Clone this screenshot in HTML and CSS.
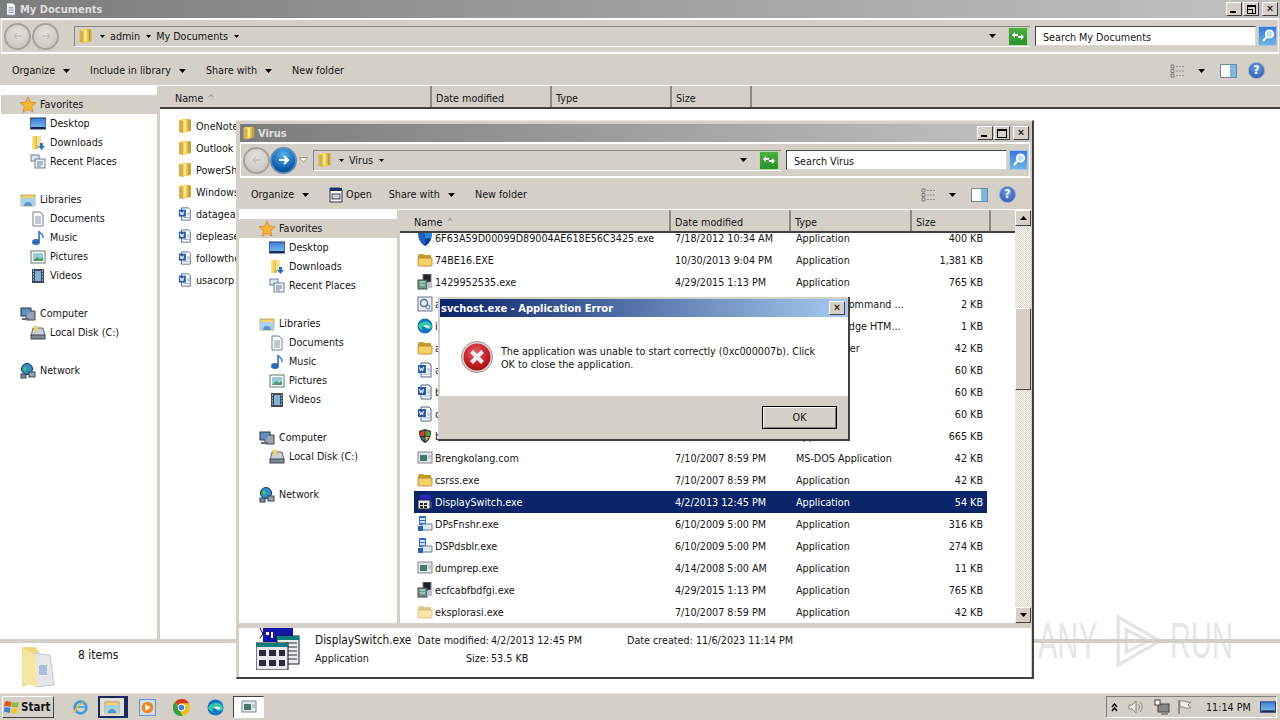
FILE: index.html
```html
<!DOCTYPE html>
<html lang="en">
<head>
<meta charset="utf-8">
<title>My Documents</title>
<link rel="stylesheet" href="styles.css">
</head>
<body>
<svg class="defs" width="0" height="0" aria-hidden="true">
  <defs>
    <linearGradient id="gf" x1="0" y1="0" x2="1" y2="0"><stop offset="0" stop-color="#f9e88a"/><stop offset=".6" stop-color="#f2cb4e"/><stop offset="1" stop-color="#c9a23e"/></linearGradient>
    <linearGradient id="gs" x1="0" y1="0" x2="0" y2="1"><stop offset="0" stop-color="#3f7fd6"/><stop offset="1" stop-color="#7cc0ea"/></linearGradient>
    <radialGradient id="ge" cx=".45" cy=".35" r=".7"><stop offset="0" stop-color="#e8626a"/><stop offset=".7" stop-color="#c0181f"/><stop offset="1" stop-color="#8c0d12"/></radialGradient>
    <symbol id="i-folder" viewBox="0 0 14 16"><path d="M1 2l3-1h8l1 1v11l-9 2-3-1z" fill="url(#gf)"/><path d="M1 2l4 1v12l-4-1z" fill="#d6b04a"/><path d="M7 2v11" stroke="#fff3b0" stroke-width="1.600"/><path d="M11 2v11" stroke="#b8923a" stroke-width="1"/></symbol>
    <symbol id="i-ofolder" viewBox="0 0 16 16"><path d="M1 4l1-2h4l1 1h7v3H1z" fill="#c79a2c"/><path d="M1 6h14v7a1 1 0 0 1-1 1H2a1 1 0 0 1-1-1z" fill="#f5d368" stroke="#a9842a" stroke-width=".8"/></symbol>
    <symbol id="i-word" viewBox="0 0 16 16"><path d="M4 1h8l2 2v12H4z" fill="#fff" stroke="#48618c"/><path d="M1 3h8v8H1z" fill="#2b5aa8"/><path d="M2.500 5l1 4 1-3 1 3 1-4" stroke="#fff" fill="none"/><path d="M10 7h3M10 9h3M6 12h7" stroke="#8ea6c8"/></symbol>
    <symbol id="i-star" viewBox="0 0 16 16"><path d="M8 0l2.300 5.200 5.700.6-4.300 3.800 1.300 5.600L8 12.300l-5 2.900 1.300-5.600L0 5.800l5.700-.6z" fill="#f7b733" stroke="#cf7f22" stroke-width=".7"/></symbol>
    <symbol id="i-desktop" viewBox="0 0 16 16"><rect y="2" width="16" height="11" fill="url(#gs)" stroke="#20386c"/><path d="M1 11h14v2H1z" fill="#1b2a52"/></symbol>
    <symbol id="i-down" viewBox="0 0 16 16"><path d="M2 1h6v13H2z" fill="url(#gf)"/><path d="M7 1h4v10H7z" fill="#f6e395"/><path d="M10 8h3v3h2l-3.500 4L8 11h2z" fill="#2a74c4"/></symbol>
    <symbol id="i-recent" viewBox="0 0 16 16"><rect x="1" y="1" width="8" height="6" fill="#dfe6ee" stroke="#6d7f97"/><rect x="5" y="5" width="10" height="9" fill="#eef2f6" stroke="#6d7f97"/><path d="M7 8h6M7 10h6M7 12h4" stroke="#6d7f97"/></symbol>
    <symbol id="i-lib" viewBox="0 0 16 16"><path d="M1 3h14v11H1z" fill="#f2d572" stroke="#a28a44" stroke-width=".7"/><path d="M1 6h14v8H1z" fill="#a9d3ec"/><path d="M4 14a4 4 0 0 1 8 0z" fill="#5d94c2"/></symbol>
    <symbol id="i-doc" viewBox="0 0 16 16"><path d="M3 1h7l3 3v11H3z" fill="#fff" stroke="#6b7c92"/><path d="M5 6h6M5 8h6M5 10h6M5 12h6" stroke="#7e90a8"/></symbol>
    <symbol id="i-music" viewBox="0 0 16 16"><path d="M9 1v10.500" stroke="#2b62ad" stroke-width="1.500"/><path d="M9 1c1 3 5 3 4 7" stroke="#3e86cc" fill="none" stroke-width="1.500"/><ellipse cx="6" cy="12" rx="4" ry="3" fill="#2f6cb8"/></symbol>
    <symbol id="i-pics" viewBox="0 0 16 16"><rect x="1" y="2" width="14" height="12" fill="#fff" stroke="#5f7a72"/><path d="M3 4h10v8H3z" fill="#9ccbd8"/><path d="M3 12l4-4 3 2 3-2v4z" fill="#4c9a6a"/></symbol>
    <symbol id="i-video" viewBox="0 0 16 16"><rect x="2" y="1" width="12" height="14" fill="#3c4c58"/><rect x="5" y="3" width="6" height="10" fill="#7fb2d6"/><path d="M3 3h1M3 6h1M3 9h1M3 12h1M12 3h1M12 6h1M12 9h1M12 12h1" stroke="#fff"/></symbol>
    <symbol id="i-pc" viewBox="0 0 16 16"><rect x="1" y="2" width="10" height="8" fill="#5d8fc4" stroke="#334"/><path d="M10 5h5v9H6v-4" fill="#9aa4b0" stroke="#445"/><path d="M2 13h7" stroke="#667" stroke-width="2"/></symbol>
    <symbol id="i-disk" viewBox="0 0 16 16"><path d="M3 3h10l2 8H1z" fill="#c8ced6" stroke="#667"/><rect x="1" y="10" width="14" height="4" fill="#7c8794" stroke="#445"/><path d="M4 1h4v5H4z" fill="#f0d15e"/><path d="M12 12h1" stroke="#5f5"/></symbol>
    <symbol id="i-net" viewBox="0 0 16 16"><circle cx="7" cy="6" r="5.500" fill="#2f8fc6" stroke="#135"/><path d="M3 4l3 0 1 3-3 1z" fill="#5cbb5c"/><rect x="9" y="9" width="6" height="5" fill="#9aa4b0" stroke="#345"/><rect x="1" y="11" width="5" height="4" fill="#7f8a96" stroke="#345"/></symbol>
    <symbol id="i-app" viewBox="0 0 16 16"><rect x="1" y="2" width="14" height="11" fill="#e4e8ea" stroke="#7b8790"/><rect x="2" y="3" width="12" height="2" fill="#dfe4e8"/><rect x="3" y="5" width="7" height="6" fill="#47796a"/><path d="M11 6h3M11 8h3" stroke="#9aa"/></symbol>
    <symbol id="i-setup" viewBox="0 0 16 16"><rect x="6" y="0" width="8" height="8" fill="#222" stroke="#778"/><rect x="1" y="6" width="9" height="9" fill="#6d9a88" stroke="#445"/><path d="M3 8h5M3 11h5" stroke="#d8e4dd"/><path d="M10 9h5v5h-5z" fill="#b9c4cc"/></symbol>
    <symbol id="i-cmdapp" viewBox="0 0 16 16"><rect x="3" y="1" width="11" height="7" fill="#2a2ab8"/><rect x="1" y="6" width="12" height="9" fill="#e4e8ea" stroke="#223"/><path d="M3 9h3v2H3zM7 9h3v2H7zM3 12h3v2H3zM7 12h3v2H7z" fill="#223"/><path d="M13 8h2v6h-2z" fill="#447"/></symbol>
    <symbol id="i-blue" viewBox="0 0 16 16"><path d="M2 0h7v9H2z" fill="#2f6fd0"/><path d="M3 2h5v2H3zM3 5h5v2H3z" fill="#d3e4f7"/><path d="M5 8h10v6H5z" fill="#dfe6ee" stroke="#6d7f97"/><path d="M1 10h5v5H1z" fill="#2a64b8"/></symbol>
    <symbol id="i-shield" viewBox="0 0 16 16"><path d="M8 0l7 2c0 7-2 11-7 14C3 13 1 9 1 2z" fill="#1d5fc0"/><path d="M8 0l7 2c0 3-.5 5-1 6.500H8z" fill="#2d86e0"/><path d="M8 8.500h6c-1 3-3 5.500-6 7.500z" fill="#0d3d90"/></symbol>
    <symbol id="i-uac" viewBox="0 0 16 16"><path d="M8 1l6 2c0 6-2 10-6 12C4 13 2 9 2 3z" fill="#333"/><path d="M3 4l4.500-1.500V8H3z" fill="#d23c2c"/><path d="M8.500 2.500L13 4v4H8.500z" fill="#48a83c"/><path d="M3.500 9H7.500v4.500z" fill="#2c70d0"/><path d="M8.500 9h4l-4 4.500z" fill="#f0c030"/></symbol>
    <symbol id="i-cfg" viewBox="0 0 16 16"><rect x="1" y="1" width="14" height="14" fill="#e9eef4" stroke="#62748c"/><circle cx="7" cy="7" r="3.500" fill="none" stroke="#5b7392" stroke-width="1.500"/><circle cx="11" cy="11" r="2" fill="none" stroke="#5b7392"/></symbol>
    <symbol id="i-edge" viewBox="0 0 16 16"><circle cx="8" cy="8" r="7.500" fill="#1273c6"/><path d="M1 9C2 3 13 1 15 8c.5 3-3 3.500-5 3-2-1-1.500-3-3-3-3 0-2 6 2 7.500" fill="#34c4a6"/><path d="M6 8c2-1.500 6-1 7 1-1 1-3 1-4.500.5z" fill="#dff4f0"/></symbol>
    <symbol id="i-chrome" viewBox="0 0 16 16"><circle cx="8" cy="8" r="8" fill="#e8c21e"/><path d="M8 0a8 8 0 0 1 7 4H8a4 4 0 0 0-3.500 2L2 2.500A8 8 0 0 1 8 0z" fill="#d8362a"/><path d="M2 2.500L5.500 9 9 15.900A8 8 0 0 1 2 2.500z" fill="#3a9e4a"/><circle cx="8" cy="8" r="3.500" fill="#fff"/><circle cx="8" cy="8" r="2.600" fill="#3f7fe0"/></symbol>
    <symbol id="i-ie" viewBox="0 0 16 16"><circle cx="8" cy="8" r="5.500" fill="none" stroke="#3c9ae0" stroke-width="2.500"/><path d="M4 7.500h8" stroke="#3c9ae0" stroke-width="1.500"/><path d="M1 13C3 7 9 2 15 1c-3 1-9 5-12 12z" fill="#e2b93a"/></symbol>
    <symbol id="i-arrowtri" viewBox="0 0 7 4"><path d="M0 0h7L3.500 4z" fill="#000"/></symbol>
  </defs>
</svg>

<main class="desktop">
  <section class="win win-main">
    <header class="titlebar">
      <svg class="ti"><use href="#i-doc"/></svg>
      <span class="titletext">My Documents</span>
      <div class="caption">
        <button class="cap"><span class="g-min"></span></button>
        <button class="cap"><span class="g-rest"></span></button>
        <button class="cap cap-x">✕</button>
      </div>
    </header>
    <div class="navbar">
      <div class="orbs">
        <span class="orb"><svg viewBox="0 0 16 16"><path d="M12 8H4m3-3L4 8l3 3" stroke="#b6b2aa" fill="none"/></svg></span>
        <span class="orb"><svg viewBox="0 0 16 16"><path d="M4 8h8M9 5l3 3-3 3" stroke="#b6b2aa" fill="none"/></svg></span>
      </div>
      <div class="address">
        <svg class="ai"><use href="#i-folder"/></svg>
        <svg class="ar"><use href="#i-arrowtri"/></svg><span class="crumb">admin</span>
        <svg class="ar"><use href="#i-arrowtri"/></svg><span class="crumb">My Documents</span>
        <svg class="ar"><use href="#i-arrowtri"/></svg>
        <svg class="ar-end"><use href="#i-arrowtri"/></svg>
        <span class="refresh"><svg viewBox="0 0 16 16"><path d="M2 7l3-3v2h3v2H5v2zM14 9l-3 3v-2H8V8h3V6z" fill="#fff"/></svg></span>
      </div>
      <div class="search"><span>Search My Documents</span></div>
      <span class="go"><svg viewBox="0 0 16 16"><circle cx="9.500" cy="6" r="3.800" fill="#bfe0f8" stroke="#fff" stroke-width="1.600"/><path d="M6.500 9L3 13" stroke="#fff" stroke-width="2"/></svg></span>
    </div>
    <div class="cmdbar">
      <span class="cmd">Organize<svg class="ca"><use href="#i-arrowtri"/></svg></span>
      <span class="cmd">Include in library<svg class="ca"><use href="#i-arrowtri"/></svg></span>
      <span class="cmd">Share with<svg class="ca"><use href="#i-arrowtri"/></svg></span>
      <span class="cmd">New folder</span>
      <div class="cmd-right">
        <svg class="view" viewBox="0 0 16 14"><path d="M1 1h3v3H1zM1 5.500h3v3H1zM1 10h3v3H1z" fill="none" stroke="#7d7d7d"/><path d="M6 2.500h9M6 7h9M6 11.500h9" stroke="#8f8f8f" stroke-dasharray="2 1"/></svg>
        <svg class="ca"><use href="#i-arrowtri"/></svg>
        <svg class="pane" viewBox="0 0 17 14"><rect x=".5" y=".5" width="16" height="13" fill="#fff" stroke="#6d8aa8"/><rect x="10" y="1" width="6" height="12" fill="#7fb7dd"/></svg>
        <span class="help">?</span>
      </div>
    </div>
    <div class="body">
      <nav class="tree">
        <div class="tr fav"><svg><use href="#i-star"/></svg>Favorites</div>
        <div class="tr sub"><svg><use href="#i-desktop"/></svg>Desktop</div>
        <div class="tr sub"><svg><use href="#i-down"/></svg>Downloads</div>
        <div class="tr sub"><svg><use href="#i-recent"/></svg>Recent Places</div>
        <div class="tr gapped"><svg><use href="#i-lib"/></svg>Libraries</div>
        <div class="tr sub"><svg><use href="#i-doc"/></svg>Documents</div>
        <div class="tr sub"><svg><use href="#i-music"/></svg>Music</div>
        <div class="tr sub"><svg><use href="#i-pics"/></svg>Pictures</div>
        <div class="tr sub"><svg><use href="#i-video"/></svg>Videos</div>
        <div class="tr gapped"><svg><use href="#i-pc"/></svg>Computer</div>
        <div class="tr sub"><svg><use href="#i-disk"/></svg>Local Disk (C:)</div>
        <div class="tr gapped"><svg><use href="#i-net"/></svg>Network</div>
      </nav>
      <div class="listpane">
        <div class="thead">
          <span class="th th-name">Name <i class="sort">^</i></span>
          <span class="th th-date">Date modified</span>
          <span class="th th-type">Type</span>
          <span class="th th-size">Size</span>
        </div>
        <div class="mainlist">
          <div class="mrow"><svg><use href="#i-folder"/></svg>OneNote</div>
          <div class="mrow"><svg><use href="#i-folder"/></svg>Outlook</div>
          <div class="mrow"><svg><use href="#i-folder"/></svg>PowerShell</div>
          <div class="mrow"><svg><use href="#i-folder"/></svg>Windows</div>
          <div class="mrow"><svg><use href="#i-word"/></svg>datagear</div>
          <div class="mrow"><svg><use href="#i-word"/></svg>depleased</div>
          <div class="mrow"><svg><use href="#i-word"/></svg>followthe</div>
          <div class="mrow"><svg><use href="#i-word"/></svg>usacorp</div>
        </div>
      </div>
    </div>
    <div class="details details-main">
      <svg class="bigfolder" viewBox="0 0 36 44"><path d="M2 2h13l4 4v30l-17 6z" fill="#f1d886"/><path d="M11 8l19 2 4 30-19 2z" fill="#e4e6ea" stroke="#c4c8ce"/><path d="M3 4l13 6 1 32L3 38z" fill="#f6e6a4"/><path d="M19 20h8v10h-8z" fill="#a9c0d8"/></svg>
      <span class="count">8 items</span>
    </div>
  </section>

  <div class="watermark" aria-hidden="true">
    <span class="wm-text">ANY</span>
    <svg viewBox="0 0 70 64"><path d="M14 2v60l52-30zM24 18v28l28-14z" fill="none" stroke="#cfcfcf" stroke-width="4"/></svg>
    <span class="wm-text">RUN</span>
  </div>

  <section class="win win-virus">
    <header class="titlebar">
      <svg class="ti"><use href="#i-folder"/></svg>
      <span class="titletext">Virus</span>
      <div class="caption">
        <button class="cap"><span class="g-min"></span></button>
        <button class="cap"><span class="g-max"></span></button>
        <button class="cap cap-x">✕</button>
      </div>
    </header>
    <div class="navbar">
      <div class="orbs">
        <span class="orb"><svg viewBox="0 0 16 16"><path d="M12 8H4m3-3L4 8l3 3" stroke="#b6b2aa" fill="none"/></svg></span>
        <span class="orb orb-on"><svg viewBox="0 0 16 16"><path d="M3 8h9M8 4l4 4-4 4" stroke="#fff" stroke-width="2" fill="none"/></svg></span>
        <svg class="orbdrop" viewBox="0 0 9 6"><path d="M.5.5h8L4.500 5.500z" fill="#fff" stroke="#9a968e"/></svg>
      </div>
      <div class="address">
        <svg class="ai"><use href="#i-folder"/></svg>
        <svg class="ar"><use href="#i-arrowtri"/></svg><span class="crumb">Virus</span>
        <svg class="ar"><use href="#i-arrowtri"/></svg>
        <svg class="ar-end"><use href="#i-arrowtri"/></svg>
        <span class="refresh"><svg viewBox="0 0 16 16"><path d="M2 7l3-3v2h3v2H5v2zM14 9l-3 3v-2H8V8h3V6z" fill="#fff"/></svg></span>
      </div>
      <div class="search"><span>Search Virus</span></div>
      <span class="go"><svg viewBox="0 0 16 16"><circle cx="9.500" cy="6" r="3.800" fill="#bfe0f8" stroke="#fff" stroke-width="1.600"/><path d="M6.500 9L3 13" stroke="#fff" stroke-width="2"/></svg></span>
    </div>
    <div class="cmdbar">
      <span class="cmd">Organize<svg class="ca"><use href="#i-arrowtri"/></svg></span>
      <span class="cmd cmd-open"><svg class="openicon" viewBox="0 0 14 16"><path d="M1 1h10l2 2v12H1z" fill="#fff" stroke="#334"/><rect x="1" y="1" width="12" height="3" fill="#1c2e78"/><rect x="3" y="7" width="8" height="5" fill="#c7d3e4" stroke="#445"/></svg>Open</span>
      <span class="cmd">Share with<svg class="ca"><use href="#i-arrowtri"/></svg></span>
      <span class="cmd">New folder</span>
      <div class="cmd-right">
        <svg class="view" viewBox="0 0 16 14"><path d="M1 1h3v3H1zM1 5.500h3v3H1zM1 10h3v3H1z" fill="none" stroke="#7d7d7d"/><path d="M6 2.500h9M6 7h9M6 11.500h9" stroke="#8f8f8f" stroke-dasharray="2 1"/></svg>
        <svg class="ca"><use href="#i-arrowtri"/></svg>
        <svg class="pane" viewBox="0 0 17 14"><rect x=".5" y=".5" width="16" height="13" fill="#fff" stroke="#6d8aa8"/><rect x="10" y="1" width="6" height="12" fill="#7fb7dd"/></svg>
        <span class="help">?</span>
      </div>
    </div>
    <div class="body">
      <nav class="tree">
        <div class="tr fav"><svg><use href="#i-star"/></svg>Favorites</div>
        <div class="tr sub"><svg><use href="#i-desktop"/></svg>Desktop</div>
        <div class="tr sub"><svg><use href="#i-down"/></svg>Downloads</div>
        <div class="tr sub"><svg><use href="#i-recent"/></svg>Recent Places</div>
        <div class="tr gapped"><svg><use href="#i-lib"/></svg>Libraries</div>
        <div class="tr sub"><svg><use href="#i-doc"/></svg>Documents</div>
        <div class="tr sub"><svg><use href="#i-music"/></svg>Music</div>
        <div class="tr sub"><svg><use href="#i-pics"/></svg>Pictures</div>
        <div class="tr sub"><svg><use href="#i-video"/></svg>Videos</div>
        <div class="tr gapped"><svg><use href="#i-pc"/></svg>Computer</div>
        <div class="tr sub"><svg><use href="#i-disk"/></svg>Local Disk (C:)</div>
        <div class="tr gapped"><svg><use href="#i-net"/></svg>Network</div>
      </nav>
      <div class="listpane">
        <div class="thead">
          <span class="th th-name">Name <i class="sort">^</i></span>
          <span class="th th-date">Date modified</span>
          <span class="th th-type">Type</span>
          <span class="th th-size">Size</span>
          <span class="th th-fill"></span>
        </div>
        <div class="rows">
          <div class="row"><span class="nm"><svg><use href="#i-shield"/></svg>6F63A59D00099D89004AE618E56C3425.exe</span><span>7/18/2012 10:34 AM</span><span>Application</span><span class="sz">400 KB</span></div>
          <div class="row"><span class="nm"><svg><use href="#i-ofolder"/></svg>74BE16.EXE</span><span>10/30/2013 9:04 PM</span><span>Application</span><span class="sz">1,381 KB</span></div>
          <div class="row"><span class="nm"><svg><use href="#i-setup"/></svg>1429952535.exe</span><span>4/29/2015 1:13 PM</span><span>Application</span><span class="sz">765 KB</span></div>
          <div class="row"><span class="nm"><svg><use href="#i-cfg"/></svg>autorun.cmd</span><span>7/10/2007 8:59 PM</span><span>Windows Command ...</span><span class="sz">2 KB</span></div>
          <div class="row"><span class="nm"><svg><use href="#i-edge"/></svg>index.htm</span><span>7/10/2007 8:59 PM</span><span>Microsoft Edge HTM...</span><span class="sz">1 KB</span></div>
          <div class="row"><span class="nm"><svg><use href="#i-ofolder"/></svg>archive.scr</span><span>7/10/2007 8:59 PM</span><span>Screen Saver</span><span class="sz">42 KB</span></div>
          <div class="row"><span class="nm"><svg><use href="#i-word"/></svg>a.doc</span><span>7/10/2007 8:59 PM</span><span>Word</span><span class="sz">60 KB</span></div>
          <div class="row"><span class="nm"><svg><use href="#i-word"/></svg>b.doc</span><span>7/10/2007 8:59 PM</span><span>Word</span><span class="sz">60 KB</span></div>
          <div class="row"><span class="nm"><svg><use href="#i-word"/></svg>c.doc</span><span>7/10/2007 8:59 PM</span><span>Word</span><span class="sz">60 KB</span></div>
          <div class="row"><span class="nm"><svg><use href="#i-uac"/></svg>bootsect.exe</span><span>7/10/2007 8:59 PM</span><span>Application</span><span class="sz">665 KB</span></div>
          <div class="row"><span class="nm"><svg><use href="#i-app"/></svg>Brengkolang.com</span><span>7/10/2007 8:59 PM</span><span>MS-DOS Application</span><span class="sz">42 KB</span></div>
          <div class="row"><span class="nm"><svg><use href="#i-ofolder"/></svg>csrss.exe</span><span>7/10/2007 8:59 PM</span><span>Application</span><span class="sz">42 KB</span></div>
          <div class="row row-sel"><span class="nm"><svg><use href="#i-cmdapp"/></svg>DisplaySwitch.exe</span><span>4/2/2013 12:45 PM</span><span>Application</span><span class="sz">54 KB</span></div>
          <div class="row"><span class="nm"><svg><use href="#i-blue"/></svg>DPsFnshr.exe</span><span>6/10/2009 5:00 PM</span><span>Application</span><span class="sz">316 KB</span></div>
          <div class="row"><span class="nm"><svg><use href="#i-blue"/></svg>DSPdsblr.exe</span><span>6/10/2009 5:00 PM</span><span>Application</span><span class="sz">274 KB</span></div>
          <div class="row"><span class="nm"><svg><use href="#i-app"/></svg>dumprep.exe</span><span>4/14/2008 5:00 AM</span><span>Application</span><span class="sz">11 KB</span></div>
          <div class="row"><span class="nm"><svg><use href="#i-setup"/></svg>ecfcabfbdfgi.exe</span><span>4/29/2015 1:13 PM</span><span>Application</span><span class="sz">765 KB</span></div>
          <div class="row"><span class="nm"><svg class="faded"><use href="#i-ofolder"/></svg>eksplorasi.exe</span><span>7/10/2007 8:59 PM</span><span>Application</span><span class="sz">42 KB</span></div>
        </div>
      </div>
      <div class="vscroll">
        <button class="sbtn"><svg class="sa"><use href="#i-arrowtri"/></svg></button>
        <div class="strack"><div class="sthumb"></div></div>
        <button class="sbtn"><svg class="sa sa-down"><use href="#i-arrowtri"/></svg></button>
      </div>
    </div>
    <div class="details details-virus">
      <svg class="appicon" viewBox="0 0 44 42"><rect x="7" y="0" width="30" height="14" fill="#1515a5"/><path d="M10 4h3v3h-3zM15 4h2v6h-2z" fill="#fff"/><path d="M4 0l3 6-3 4" stroke="#000" fill="none"/><rect x="21" y="8" width="22" height="28" fill="#e8ecec" stroke="#123"/><rect x="21" y="8" width="22" height="4" fill="#0d7d7d"/><path d="M30 15h11M30 19h11M30 23h11M30 27h11M30 31h11" stroke="#333"/><rect x="0" y="15" width="32" height="27" fill="#e4e8ea" stroke="#111"/><rect x="0" y="15" width="32" height="4" fill="#0d7d7d"/><path d="M3 22h7v6H3zM13 22h7v6h-7zM23 22h6v6h-6zM3 32h7v6H3zM13 32h7v6h-7zM23 32h6v6h-6z" fill="#2a2a3c"/></svg>
      <div class="meta">
        <span class="m-name">DisplaySwitch.exe</span>
        <span class="m-lab">Date modified:</span>
        <span>4/2/2013 12:45 PM</span>
        <span>Date created: 11/6/2023 11:14 PM</span>
        <span>Application</span>
        <span class="m-lab">Size:</span>
        <span>53.5 KB</span>
      </div>
    </div>
  </section>

  <section class="dialog" role="alertdialog">
    <header class="dlg-title">
      <span>svchost.exe - Application Error</span>
      <button class="cap dlg-x">✕</button>
    </header>
    <div class="dlg-body">
      <svg class="erricon" viewBox="0 0 32 32"><circle cx="16" cy="16" r="15.500" fill="#e9d8d8" stroke="#9b8d8d"/><circle cx="16" cy="16" r="13.500" fill="url(#ge)"/><path d="M10.500 10.500l11 11M21.500 10.500l-11 11" stroke="#f3eeee" stroke-width="4"/></svg>
      <p>The application was unable to start correctly (0xc000007b). Click OK to close the application.</p>
    </div>
    <div class="dlg-foot"><button class="okbtn">OK</button></div>
  </section>

  <footer class="taskbar">
    <button class="start"><svg viewBox="0 0 16 16"><path d="M1 3c3-2 4 0 6.500 0L6.500 8C4 8 3 6 0 8z" fill="#e2552c"/><path d="M8 3c3 1 4 1 7 0l-1 5c-3 1-4 0-7 0z" fill="#8cbb3c"/><path d="M0 9c3-2 4 0 6.500 0L5.500 14C3 14 2 12-1 14z" fill="#3c86d8"/><path d="M7 9c3 1 4 1 7 0l-1 5c-3 1-4 0-7 0z" fill="#f2c230"/></svg>Start</button>
    <div class="tasks">
      <svg class="tk tk-ie"><use href="#i-ie"/></svg>
      <span class="tk-ex"><svg><use href="#i-lib"/></svg></span>
      <span class="tk-wmp"><svg viewBox="0 0 16 16"><rect x=".5" y=".5" width="15" height="15" fill="#cfe0f2" stroke="#6f94c8"/><circle cx="8" cy="8" r="5.500" fill="#f08a1e"/><path d="M6 5l5 3-5 3z" fill="#fff"/></svg></span>
      <svg class="tk tk-chrome"><use href="#i-chrome"/></svg>
      <svg class="tk tk-edge"><use href="#i-edge"/></svg>
      <span class="tk-app"><svg><use href="#i-app"/></svg></span>
    </div>
    <div class="tray">
      <svg class="chev" viewBox="0 0 7 9"><path d="M1 4l2.500-3L6 4M1 8l2.500-3L6 8" fill="none" stroke="#000" stroke-width="1.500"/></svg>
      <svg class="ty ty-sound" viewBox="0 0 16 16"><path d="M1 6h3l4-4v12l-4-4H1z" fill="#e8e6e0" stroke="#8a8880"/><path d="M10 5c2 2 2 4 0 6M12 3c3 3 3 7 0 10" stroke="#8a8880" fill="none"/></svg>
      <svg class="ty ty-net" viewBox="0 0 16 16"><rect x="4" y="5" width="11" height="8" fill="#888" stroke="#444"/><rect x="1" y="1" width="5" height="5" fill="#fff" stroke="#444"/><path d="M7 15h7" stroke="#444"/></svg>
      <svg class="ty ty-flag" viewBox="0 0 16 16"><path d="M3 1v14" stroke="#777" stroke-width="1.500"/><path d="M4 2h5l1 1h5l-3 3 3 3H9L8 8H4z" fill="#f0eee8" stroke="#8a8880"/></svg>
      <span class="clock">11:14 PM</span>
      <svg class="ty ty-desk"><use href="#i-desktop"/></svg>
    </div>
  </footer>
</main>
</body>
</html>
```

FILE: styles.css
```css
* { box-sizing: border-box; }
html, body { margin: 0; height: 100%; }
body {
  width: 1280px; height: 720px; overflow: hidden; background: #fff; color: #151515;
  font: 10.700px/13px "DejaVu Sans Condensed", "DejaVu Sans", sans-serif;
}
.defs { position: absolute; }
button { font: inherit; color: inherit; padding: 0; }
svg { display: block; flex: none; }

.desktop { position: relative; width: 1280px; height: 720px; }

/* Windows sit on a free desktop canvas */
.win { position: absolute; display: flex; flex-direction: column; background: #d4d0c8; }
.win-main { left: 0; top: 0; width: 1280px; height: 693px; }
.win-virus {
  left: 236px; top: 120px; width: 798px; height: 559px; padding: 3px 1px 0 2px;
  border: 1px solid #d4d0c8; border-top-color: #e8e6e1; border-right: 2px solid #404040; border-bottom: 2px solid #404040;
}

.titlebar {
  display: flex; align-items: center; height: 18px; flex: none; padding-left: 4px;
  background: linear-gradient(90deg, #7c7c7c, #c2c2c2);
}
.win-virus .titlebar { padding-left: 2px; margin-left: 1px; }
.ti { width: 14px; height: 14px; }
.titletext { margin-left: 2px; font-size: 11px; font-weight: 700; color: #dedede; }
.caption { margin-left: auto; margin-right: 2px; display: flex; gap: 1px; }
.cap {
  width: 16px; height: 14px; display: flex; align-items: center; justify-content: center;
  background: #d4d0c8; font-size: 10px; line-height: 1; font-weight: 700; color: #000;
  border: 1px solid; border-color: #fff #404040 #404040 #fff;
}
.cap-x { margin-left: 2px; }
.g-min { width: 6px; height: 2px; background: #000; margin-top: 6px; margin-right: 2px; }
.g-max { width: 10px; height: 9px; border: 1px solid #000; border-top-width: 2px; }
.g-rest { width: 9px; height: 9px; border: 1px solid #000; border-top-width: 2px; box-shadow: inset -2px 2px 0 #d4d0c8, inset -3px 3px 0 #000; }

.navbar {
  display: flex; align-items: center; height: 36px; flex: none; padding: 0 1px 0 2px; margin: 0 1px;
  border: 1px solid #fff; border-top-width: 2px; border-bottom-width: 2px;
}
.orbs { display: flex; align-items: center; width: 70px; flex: none; }
.orb {
  width: 27px; height: 27px; flex: none; border-radius: 50%; border: 2px solid #a5a29b;
  background: radial-gradient(circle at 50% 35%, #e4e2dd, #c4c1ba); display: flex; align-items: center; justify-content: center;
}
.win-main .orb + .orb { margin-left: 1px; }
.orb svg { width: 16px; height: 16px; }
.orb-on { border-color: #5e8cb8; background: radial-gradient(circle at 50% 25%, #58b0ea, #0b5ca8 70%, #073a78); }
.orbdrop { width: 9px; height: 6px; margin-left: 2px; }

.address {
  flex: 1; display: flex; align-items: center; height: 21px; padding-left: 3px;
  border-left: 1px solid #8a8880; border-top: 1px solid #8a8880; border-bottom: 1px solid #fff;
}
.ai { width: 15px; height: 16px; margin-right: 7px; }
.ar { width: 5px; height: 3px; margin-right: 5px; }
.crumb { margin-right: 6px; }
.ar-end { width: 7px; height: 4px; margin-left: auto; margin-right: 12px; }
.refresh {
  width: 20px; height: 19px; background: linear-gradient(#4cb044, #2c902c); border: 1px solid #b8d8b0;
  margin-right: 2px; display: flex; align-items: center; justify-content: center;
}
.refresh svg { width: 16px; height: 16px; }
.search {
  width: 221px; height: 20px; margin-left: 5px; background: #fff; padding: 4px 0 0 7px;
  border: 1px solid #d8d6d0; border-top: 1px solid #444; border-left: 1px solid #444;
}
.go {
  width: 19px; height: 20px; margin-left: 2px; background: linear-gradient(#3a78d4, #6eb4e4); border: 1px solid #a8c4e0;
  display: flex; align-items: center; justify-content: center;
}
.go svg { width: 16px; height: 16px; }

.cmdbar {
  display: flex; align-items: center; height: 32px; flex: none; padding: 2px 0 0 12px;
  border-bottom: 1px solid #fff;
}
.cmd { display: flex; align-items: center; margin-right: 20px; white-space: nowrap; }
.ca { width: 7px; height: 4px; margin-left: 8px; }
.win-virus .cmd-open { margin-right: 17px; }
.openicon { width: 14px; height: 16px; margin-right: 3px; }
.cmd-right { margin-left: auto; display: flex; align-items: center; padding-right: 15px; }
.view { width: 16px; height: 14px; margin-right: 4px; }
.cmd-right .ca { margin-left: 8px; margin-right: 15px; }
.pane { width: 17px; height: 14px; margin-right: 11px; }
.help {
  width: 17px; height: 17px; border-radius: 50%; background: radial-gradient(circle at 50% 35%, #6f9fe0, #274fa8);
  border: 1px solid #8ea6cc; color: #fff; font-weight: 700; font-size: 12px; line-height: 15px; text-align: center;
}

.body { flex: 1; min-height: 0; display: flex; background: #fff; }
.tree { width: 160px; flex: none; padding-top: 9px; border-right: 3px solid #d4d0c8; overflow: hidden; }
.win-virus .tree { width: 161px; }
.tr { display: flex; align-items: center; height: 19px; padding-left: 20px; white-space: nowrap; }
.tr svg { width: 16px; height: 16px; margin-right: 4px; }
.fav { background: #d4d0c8; }
.win-main .fav { margin-left: 1px; padding-left: 19px; }
.sub { padding-left: 30px; }
.gapped { margin-top: 19px; }

.listpane { flex: 1; min-width: 0; display: flex; flex-direction: column; overflow: hidden; }
.thead {
  height: 23px; flex: none; display: flex; background: #d4d0c8; border-bottom: 2px solid #404040;
}
.th { display: flex; align-items: center; height: 21px; padding: 3px 0 0 4px; border-right: 2px solid #8a8880; }
.win-main .th-name { width: 272px; padding-left: 15px; }
.win-main .th-date { width: 120px; }
.win-main .th-type { width: 120px; }
.win-main .th-size { width: 80px; }
.win-virus .th-name { width: 271px; padding-left: 14px; }
.win-virus .th-date { width: 120px; }
.win-virus .th-type { width: 121px; }
.win-virus .th-size { width: 79px; }
.win-virus .th-fill { border-right: 0; }
.sort { font-style: normal; color: #8a8880; margin-left: 4px; font-size: 9px; }

.mainlist { padding-top: 6px; }
.mrow { display: flex; align-items: center; height: 22px; padding-left: 18px; white-space: nowrap; }
.mrow svg { width: 14px; height: 16px; margin-right: 4px; }

.rows { flex: 1; min-height: 0; overflow: hidden; }
.row {
  display: grid; grid-template-columns: 261px 121px 115px 72px; width: 573px; margin-left: 14px;
  height: 22px; align-items: center; white-space: nowrap;
}
.row:first-child { margin-top: -6px; }
.nm { display: flex; align-items: center; }
.nm svg { width: 16px; height: 16px; margin: 0 2px 0 3px; }
.faded { opacity: .55; }
.sz { text-align: right; }
.row-sel { background: #0a246a; color: #fff; }

.vscroll { width: 16px; flex: none; display: flex; flex-direction: column; }
.sbtn {
  width: 16px; height: 16px; flex: none; background: #d4d0c8; display: flex; align-items: center; justify-content: center;
  border: 1px solid; border-color: #fff #404040 #404040 #fff;
}
.sa { width: 7px; height: 4px; transform: rotate(180deg); }
.sa-down { transform: none; }
.strack {
  flex: 1; padding-top: 82px;
  background: repeating-conic-gradient(#d4d0c8 0 25%, #fff 0 50%) 0 0 / 2px 2px;
}
.sthumb { height: 82px; background: #d4d0c8; border: 1px solid; border-color: #fff #404040 #404040 #fff; }

.details { flex: none; background: #fff; display: flex; }
.details-main { height: 54px; padding: 2px 0 0 20px; border-top: 4px solid #d4d0c8; }
.bigfolder { width: 36px; height: 44px; }
.count { margin: 4px 0 0 22px; font-size: 12px; }
.details-virus { height: 54px; padding: 0 0 0 17px; border-top: 5px solid #d4d0c8; }
.appicon { width: 44px; height: 42px; }
.meta {
  display: grid; grid-template-columns: 102px 74px 136px auto; grid-auto-rows: 18px; align-items: center;
  margin: 3px 0 0 15px; white-space: nowrap;
}
.m-name { font-size: 11.800px; }
.m-lab { text-align: right; padding-right: 2px; }

.watermark {
  position: absolute; left: 1038px; top: 610px; width: 194px; height: 62px; display: flex; align-items: center;
  justify-content: space-between; color: #d2d2d2; opacity: .55; font: 50px/62px "Liberation Sans", sans-serif;
}
.watermark svg { width: 56px; height: 62px; }
.wm-text { display: block; width: 62px; white-space: nowrap; transform: scaleX(.58); transform-origin: 0 50%; }

.dialog {
  position: absolute; left: 438px; top: 297px; width: 412px; height: 144px; display: flex; flex-direction: column;
  padding: 2px 0 0 2px; background: #d4d0c8; border-right: 2px solid #404040; border-bottom: 2px solid #404040;
}
.dlg-title {
  height: 18px; flex: none; display: flex; align-items: center; justify-content: space-between; padding: 0 3px 0 1px;
  background: linear-gradient(90deg, #0a246a, #a6caf0); color: #fff; font-weight: 700; font-size: 11px;
}
.dlg-x { width: 16px; height: 14px; }
.dlg-body { height: 79px; flex: none; display: flex; background: #fff; padding: 24px 0 0 21px; }
.erricon { width: 32px; height: 32px; }
.dlg-body p { margin: 4px 0 0 8px; width: 325px; line-height: 13px; }
.dlg-foot { flex: 1; display: flex; justify-content: flex-end; align-items: flex-start; padding: 10px 11px 0 0; }
.okbtn {
  width: 75px; height: 23px; background: #d4d0c8; border: 1px solid #000;
  box-shadow: inset 1px 1px 0 #fff, inset -1px -1px 0 #808080;
}

.taskbar {
  position: absolute; left: 0; top: 693px; width: 1280px; height: 27px; display: flex; align-items: center;
  background: #d4d0c8; border-top: 1px solid #e6e4df; padding: 0 3px 0 2px;
}
.start {
  width: 52px; height: 22px; display: flex; align-items: center; gap: 1px; padding-left: 1px; font-weight: 700; font-size: 11.500px;
  background: #d4d0c8; border: 1px solid; border-color: #fff #404040 #404040 #fff;
}
.start svg { width: 16px; height: 16px; }
.tasks { display: flex; align-items: center; margin-left: 18px; }
.tk { width: 17px; height: 17px; }
.tk-ex {
  width: 30px; height: 22px; margin-left: 9px; display: flex; align-items: center; justify-content: center;
  border: 2px solid #1a2a60; border-right-width: 4px; background: #e0ddd6;
}
.tk-ex svg { width: 18px; height: 16px; }
.tk-wmp { width: 17px; height: 17px; margin-left: 11px; }
.tk-chrome { margin-left: 17px; }
.tk-edge { margin-left: 17px; }
.tk-app {
  width: 31px; height: 22px; margin-left: 9px; background: #fff; border: 1px solid #404040; border-right-color: #fff; border-bottom-color: #fff;
  display: flex; align-items: center; justify-content: center;
}
.tk-app svg { width: 16px; height: 16px; }
.tray {
  margin-left: auto; width: 171px; height: 22px; display: flex; align-items: center; padding-left: 3px;
  border: 1px solid; border-color: #808080 #fff #fff #808080;
}
.chev { width: 7px; height: 9px; margin-left: 1px; }
.ty { width: 16px; height: 16px; }
.ty-sound { margin-left: 10px; }
.ty-net { margin-left: 10px; }
.ty-flag { margin-left: 6px; }
.clock { margin-left: 14px; width: 50px; white-space: nowrap; }
.ty-desk { margin-left: 5px; height: 15px; }
```
